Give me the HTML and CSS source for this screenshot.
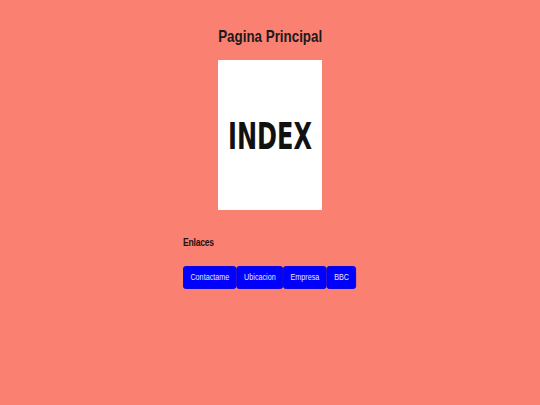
FILE: index.html
```html
<!DOCTYPE html>
<html lang="es">
<head>
<meta charset="utf-8">
<title>Pagina Principal</title>
<link rel="stylesheet" href="styles.css">
</head>
<body>
<main class="page">
  <h1 class="title">Pagina Principal</h1>
  <div class="logo">
    <svg class="logo-svg" width="104" height="150" viewBox="0 0 104 150">
      <rect width="104" height="150" fill="#ffffff"/>
      <text x="52" y="89" text-anchor="middle" textLength="84" lengthAdjust="spacingAndGlyphs" class="logo-text">INDEX</text>
    </svg>
  </div>
  <section class="links">
    <h2 class="links-title">Enlaces</h2>
    <nav class="buttons">
      <button class="btn">Contactame</button>
      <button class="btn">Ubicacion</button>
      <button class="btn">Empresa</button>
      <button class="btn">BBC</button>
    </nav>
  </section>
</main>
</body>
</html>
```
FILE: styles.css
```css
html, body {
  margin: 0;
  padding: 0;
}
body {
  background: #fa8072;
  width: 540px;
  height: 405px;
  font-family: "Liberation Sans", Arial, sans-serif;
  color: #1a1a1a;
}
.page {
  display: flex;
  flex-direction: column;
  align-items: center;
  padding-top: 26px;
}
.title {
  margin: 0 0 14px 0;
  font-size: 16.5px;
  line-height: 20px;
  font-weight: bold;
  color: #1a1a1a;
  transform: scaleX(0.81);
}
.logo {
  width: 104px;
  height: 150px;
  display: flex;
}
.logo-svg {
  display: block;
}
.logo-text {
  font-family: "DejaVu Sans", "Liberation Sans", sans-serif;
  font-weight: bold;
  font-size: 38px;
  fill: #111111;
}
.links {
  margin-top: 25px;
  display: flex;
  flex-direction: column;
  align-items: flex-start;
  transform: scaleX(0.82);
}
.links-title {
  margin: 0 0 17px 0;
  font-size: 10.5px;
  line-height: 14px;
  font-weight: bold;
  color: #2a1010;
  letter-spacing: -0.3px;
}
.buttons {
  display: flex;
}
.btn {
  height: 23px;
  padding: 0 8px;
  margin: 0;
  border: 1px solid #0000e0;
  border-radius: 3px;
  background: #0000ff;
  color: #e8e8ff;
  font-family: "Liberation Sans", Arial, sans-serif;
  font-size: 8.8px;
  line-height: 21px;
}
```
